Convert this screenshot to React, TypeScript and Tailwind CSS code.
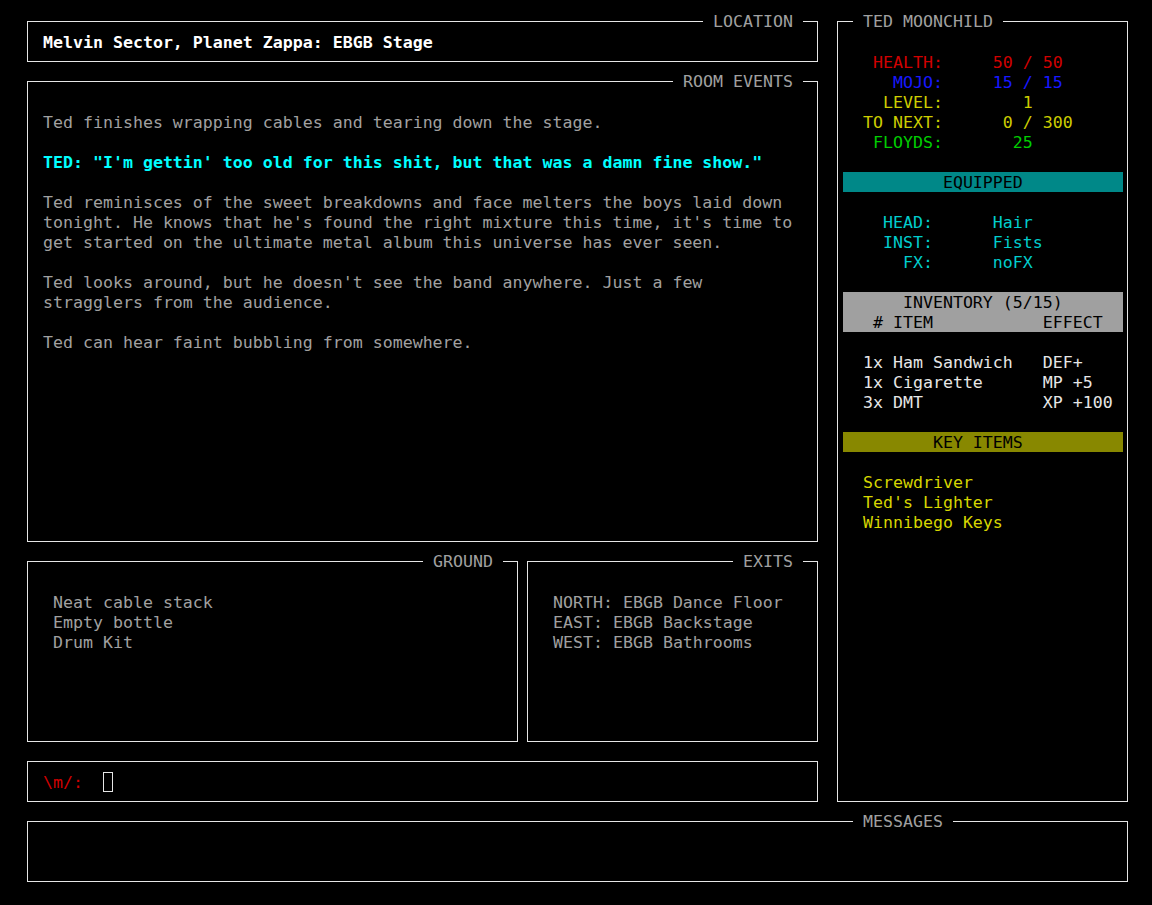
import React from "react";

const FONT = "font-['DejaVu_Sans_Mono','Liberation_Mono',monospace] text-[16.6px] leading-[20px]";

function Box({
  title,
  align = "right",
  titleLeft,
  className = "",
  children,
}: {
  title?: string;
  align?: "left" | "right";
  titleLeft?: string;
  className?: string;
  children?: React.ReactNode;
}) {
  return (
    <div className={`relative border border-[#e6e6e6] ${className}`}>
      {title && (
        <span
          className={`absolute top-[-10px] bg-black px-[10px] whitespace-pre text-[#a0a0a0] ${
            align === "right" ? "right-[14px]" : titleLeft || "left-[15px]"
          }`}
        >
          {title}
        </span>
      )}
      {children}
    </div>
  );
}

const Line = ({ t, c = "" }: { t: string; c?: string }) => (
  <div className={`h-[20px] whitespace-pre ${c}`}>
    <span className="relative top-[1px]">{t}</span>
  </div>
);

export default function App() {
  return (
    <div className={`min-h-[905px] w-full bg-black pl-[27px] pt-[21px] ${FONT}`}>
      <div className="flex gap-[19px]">
        {/* left column */}
        <div className="flex w-[791px] flex-col gap-[19px]">
          <Box title="LOCATION" className="h-[41px] pl-[15px] pt-[10px]">
            <Line t="Melvin Sector, Planet Zappa: EBGB Stage" c="font-bold text-white" />
          </Box>

          <Box title="ROOM EVENTS" className="h-[461px] pl-[15px] pt-[30px] text-[#a0a0a0]">
            <Line t="Ted finishes wrapping cables and tearing down the stage." />
            <Line t="" />
            <Line
              t={`TED: "I'm gettin' too old for this shit, but that was a damn fine show."`}
              c="font-bold text-[#00ffff]"
            />
            <Line t="" />
            <Line t="Ted reminisces of the sweet breakdowns and face melters the boys laid down" />
            <Line t="tonight. He knows that he's found the right mixture this time, it's time to" />
            <Line t="get started on the ultimate metal album this universe has ever seen." />
            <Line t="" />
            <Line t="Ted looks around, but he doesn't see the band anywhere. Just a few" />
            <Line t="stragglers from the audience." />
            <Line t="" />
            <Line t="Ted can hear faint bubbling from somewhere." />
          </Box>

          <div className="flex h-[181px] gap-[9px]">
            <Box title="GROUND" className="w-[491px] pl-[25px] pt-[30px] text-[#a0a0a0]">
              <Line t="Neat cable stack" />
              <Line t="Empty bottle" />
              <Line t="Drum Kit" />
            </Box>
            <Box title="EXITS" className="w-[291px] pl-[25px] pt-[30px] text-[#a0a0a0]">
              <Line t="NORTH: EBGB Dance Floor" />
              <Line t="EAST: EBGB Backstage" />
              <Line t="WEST: EBGB Bathrooms" />
            </Box>
          </div>

          <Box className="flex h-[41px] items-start pl-[15px] pt-[10px]">
            <span className="relative top-[1px] whitespace-pre text-[#d00000]">{"\\m/:  "}</span>
            <span className="inline-block h-[20px] w-[10px] border border-[#e6e6e6]" />
          </Box>
        </div>

        {/* right column */}
        <Box title="TED MOONCHILD" align="left" className="h-[781px] w-[291px] pl-[5px] pr-[4px] pt-[30px]">
          <Line t="   HEALTH:     50 / 50" c="text-[#d00000]" />
          <Line t="     MOJO:     15 / 15" c="text-[#1818ff]" />
          <Line t="    LEVEL:        1" c="text-[#cdcd00]" />
          <Line t="  TO NEXT:      0 / 300" c="text-[#cdcd00]" />
          <Line t="   FLOYDS:       25" c="text-[#00cd00]" />
          <Line t="" />
          <Line t="          EQUIPPED" c="bg-[#008888] text-black" />
          <Line t="" />
          <Line t="    HEAD:      Hair" c="text-[#00cdcd]" />
          <Line t="    INST:      Fists" c="text-[#00cdcd]" />
          <Line t="      FX:      noFX" c="text-[#00cdcd]" />
          <Line t="" />
          <div className="bg-[#a0a0a0] text-black">
            <Line t="      INVENTORY (5/15)" />
            <Line t="   # ITEM           EFFECT" />
          </div>
          <Line t="" />
          <Line t="  1x Ham Sandwich   DEF+" c="text-[#e6e6e6]" />
          <Line t="  1x Cigarette      MP +5" c="text-[#e6e6e6]" />
          <Line t="  3x DMT            XP +100" c="text-[#e6e6e6]" />
          <Line t="" />
          <Line t="         KEY ITEMS" c="bg-[#888800] text-black" />
          <Line t="" />
          <Line t="  Screwdriver" c="text-[#d6d600]" />
          <Line t="  Ted's Lighter" c="text-[#d6d600]" />
          <Line t="  Winnibego Keys" c="text-[#d6d600]" />
        </Box>
      </div>

      <div className="mt-[19px]">
        <Box title="MESSAGES" align="left" titleLeft="left-[825px]" className="h-[61px] w-[1101px]" />
      </div>
    </div>
  );
}
